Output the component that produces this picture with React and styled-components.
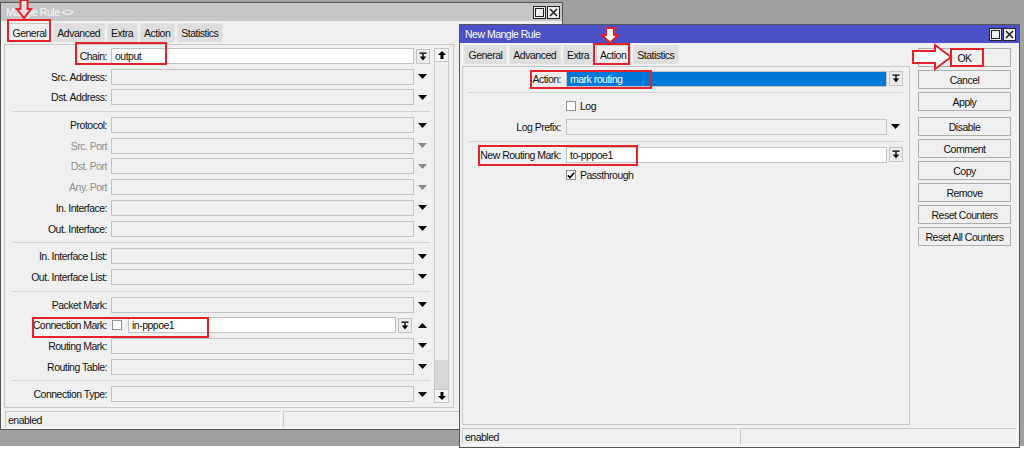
import React from "react";
import styled, { createGlobalStyle } from "styled-components";

const GlobalStyle = createGlobalStyle`
  html, body { margin: 0; padding: 0; background: #fff; }
  body {
    font-family: "Liberation Sans", Arial, sans-serif;
    font-size: 10.5px;
    letter-spacing: -0.5px;
    color: #111;
  }
`;

const RED = "#e52229";

const Desktop = styled.div`
  position: relative;
  width: 1024px;
  height: 459px;
  overflow: hidden;
  background: #fff;
`;

const Backdrop = styled.div`
  height: 446px;
  background: #a0a0a0;
`;

const Window = styled.div`
  position: absolute;
  left: ${(p) => p.$x}px;
  top: ${(p) => p.$y}px;
  width: ${(p) => p.$w}px;
  height: ${(p) => p.$h}px;
  box-sizing: border-box;
  display: flex;
  flex-direction: column;
  background: #f0f0f0;
  border: 1px solid #555;
`;

const TitleBar = styled.div`
  height: 18px;
  flex: none;
  display: flex;
  align-items: center;
  justify-content: space-between;
  padding: 0 ${(p) => p.$padR}px 0 5px;
  background: ${(p) => (p.$active ? "#4c51c8" : "#c6c6c6")};
  color: ${(p) => (p.$active ? "#fff" : "#f7f7f7")};
`;

const TitleButtons = styled.div`
  display: flex;
  gap: 1px;
`;

const Body = styled.div`
  flex: 1;
  min-height: 0;
  display: flex;
  gap: 8px;
  padding: 2px ${(p) => p.$padR}px 0 ${(p) => p.$padL}px;
`;

const Main = styled.div`
  display: flex;
  flex-direction: column;
  width: ${(p) => p.$w}px;
  flex: none;
`;

const TabStrip = styled.div`
  display: flex;
  gap: 2px;
  height: 19px;
  flex: none;
  padding-left: ${(p) => p.$inset}px;
`;

const Tab = styled.div`
  display: flex;
  align-items: center;
  padding: 0 3.5px;
  background: ${(p) => (p.$active ? "#f0f0f0" : "#dedede")};
  border: 1px solid ${(p) => (p.$active ? "#c9c9c9" : "#e4e4e4")};
  border-bottom: none;
`;

const Panel = styled.div`
  flex: 1;
  min-height: 0;
  margin-top: 2px;
  border: 1px solid #c6c6c6;
  display: flex;
  padding: ${(p) => p.$padT}px ${(p) => p.$padR}px 0 0;
`;

const Form = styled.div`
  display: flex;
  flex-direction: column;
  flex: none;
`;

const Row = styled.div`
  display: flex;
  align-items: center;
  height: 16px;
  margin-bottom: 4.7px;
  flex: none;
`;

const Label = styled.div`
  width: ${(p) => p.$w}px;
  margin-right: ${(p) => p.$gap}px;
  text-align: right;
  white-space: nowrap;
  flex: none;
  color: ${(p) => (p.$muted ? "#8e8e8e" : "#111")};
`;

const Field = styled.div`
  width: ${(p) => p.$w}px;
  height: 100%;
  display: flex;
  align-items: center;
  flex: none;
`;

const Box = styled.div`
  flex: 1;
  height: 16px;
  box-sizing: border-box;
  margin-left: ${(p) => p.$ml || 0}px;
  border: 1px solid #c2c2c2;
  background: ${(p) => (p.$selected ? "#0078d7" : p.$filled ? "#fff" : "#f0f0f0")};
  color: ${(p) => (p.$selected ? "#fff" : "#111")};
  padding-left: 3px;
  display: flex;
  align-items: center;
  white-space: nowrap;
  overflow: hidden;
`;

const Tail = styled.div`
  width: 17px;
  height: 100%;
  display: flex;
  align-items: center;
  justify-content: center;
  flex: none;
`;

const ComboBtn = styled.div`
  width: 14px;
  height: 15px;
  box-sizing: border-box;
  margin-left: ${(p) => p.$ml || 0}px;
  border: 1px solid #c4c4c4;
  background: #ececec;
  display: flex;
  align-items: center;
  justify-content: center;
  flex: none;
`;

const Sep = styled.div`
  height: 1px;
  background: #d4d4d4;
  margin: 1px ${(p) => p.$r}px 5px ${(p) => p.$l}px;
  flex: none;
`;

const Check = styled.div`
  width: 10px;
  height: 10px;
  box-sizing: border-box;
  margin-left: ${(p) => p.$ml || 0}px;
  border: 1px solid #8f8f8f;
  background: #fff;
  display: flex;
  align-items: center;
  justify-content: center;
  flex: none;
`;

const CheckText = styled.span`
  margin-left: 4px;
`;

const Scrollbar = styled.div`
  width: 15px;
  margin: 0 0 4px 3px;
  display: flex;
  flex-direction: column;
  flex: none;
`;

const ScrollBtn = styled.div`
  height: 14px;
  box-sizing: border-box;
  border: 1px solid #c4c4c4;
  background: #f4f4f4;
  display: flex;
  align-items: center;
  justify-content: center;
  flex: none;
`;

const Track = styled.div`
  flex: 1;
  border-left: 1px solid #c8c8c8;
  border-right: 1px solid #c8c8c8;
  background: #efefef;
  display: flex;
  flex-direction: column;
  justify-content: flex-end;
`;

const Thumb = styled.div`
  height: 29px;
  background: #d7d7d7;
`;

const Buttons = styled.div`
  width: 93px;
  flex: none;
  display: flex;
  flex-direction: column;
  padding-top: 3px;
`;

const Button = styled.div`
  height: 19px;
  box-sizing: border-box;
  border: 1px solid #adadad;
  background: #f0f0f0;
  margin-bottom: ${(p) => (p.$wide ? 6 : 3)}px;
  display: flex;
  align-items: center;
  justify-content: center;
  white-space: nowrap;
`;

const StatusBar = styled.div`
  display: flex;
  gap: 2px;
  height: 17px;
  flex: none;
  margin: 3px 2px ${(p) => p.$mb}px ${(p) => p.$ml}px;
`;

const StatusCell = styled.div`
  width: ${(p) => (p.$w ? `${p.$w}px` : "auto")};
  flex: ${(p) => (p.$w ? "none" : 1)};
  box-sizing: border-box;
  border: 1px solid;
  border-color: #c8c8c8 #fafafa #fafafa #c8c8c8;
  padding-left: 2px;
  display: flex;
  align-items: center;
`;

const RedBox = styled.div`
  position: absolute;
  left: ${(p) => p.$x}px;
  top: ${(p) => p.$y}px;
  width: ${(p) => p.$w}px;
  height: ${(p) => p.$h}px;
  box-sizing: border-box;
  border: 2px solid ${RED};
  pointer-events: none;
`;

const Overlay = styled.svg`
  position: absolute;
  left: ${(p) => p.$x}px;
  top: ${(p) => p.$y}px;
  overflow: visible;
  pointer-events: none;
`;

/* little drawings */

const DropArrow = ({ muted }) => (
  <svg width="9" height="5" viewBox="0 0 9 5">
    <polygon points="0,0 9,0 4.5,5" fill={muted ? "#8a8a8a" : "#000"} />
  </svg>
);

const UpArrow = () => (
  <svg width="9" height="5" viewBox="0 0 9 5">
    <polygon points="0,5 9,5 4.5,0" fill="#000" />
  </svg>
);

const ComboIcon = () => (
  <svg width="8" height="9" viewBox="0 0 8 9">
    <rect x="0.5" y="0.5" width="7" height="1.3" fill="#000" />
    <rect x="3.3" y="2" width="1.4" height="3" fill="#000" />
    <polygon points="0.8,4.6 7.2,4.6 4,8.6" fill="#000" />
  </svg>
);

const ScrollIcon = ({ down }) => (
  <svg width="8" height="8" viewBox="0 0 8 8">
    <polygon
      points={down ? "4,8 8,4 5.5,4 5.5,0 2.5,0 2.5,4 0,4" : "4,0 8,4 5.5,4 5.5,8 2.5,8 2.5,4 0,4"}
      fill="#000"
    />
  </svg>
);

const Tick = () => (
  <svg width="8" height="7" viewBox="0 0 8 7">
    <polyline points="0.8,3.4 3,5.6 7.2,0.8" fill="none" stroke="#000" strokeWidth="1.6" />
  </svg>
);

const MaxIcon = () => (
  <svg width="13" height="13" viewBox="0 0 13 13">
    <rect x="0.5" y="0.5" width="12" height="12" fill="#f0f0f0" stroke="#222" />
    <rect x="2.5" y="2.5" width="8" height="8" fill="none" stroke="#222" />
  </svg>
);

const CloseIcon = () => (
  <svg width="13" height="13" viewBox="0 0 13 13">
    <rect x="0.5" y="0.5" width="12" height="12" fill="#f0f0f0" stroke="#222" />
    <path d="M3 3 L10 10 M10 3 L3 10" stroke="#222" strokeWidth="1.6" />
  </svg>
);

/* data */

const leftRows = [
  { label: "Chain:", kind: "combo", value: "output" },
  { label: "Src. Address:" },
  { label: "Dst. Address:" },
  "sep",
  { label: "Protocol:" },
  { label: "Src. Port", muted: true },
  { label: "Dst. Port", muted: true },
  { label: "Any. Port", muted: true },
  { label: "In. Interface:" },
  { label: "Out. Interface:" },
  "sep",
  { label: "In. Interface List:" },
  { label: "Out. Interface List:" },
  "sep",
  { label: "Packet Mark:" },
  { label: "Connection Mark:", kind: "mark", value: "in-pppoe1" },
  { label: "Routing Mark:" },
  { label: "Routing Table:" },
  "sep",
  { label: "Connection Type:" },
];

const rightRows = [
  { label: "Action:", kind: "combo", value: "mark routing", selected: true },
  "sep",
  { kind: "check", text: "Log" },
  { label: "Log Prefix:" },
  "sep",
  { label: "New Routing Mark:", kind: "combo", value: "to-pppoe1" },
  { kind: "check", text: "Passthrough", checked: true },
];

const tabs = ["General", "Advanced", "Extra", "Action", "Statistics"];

const buttons = [
  "OK",
  "Cancel",
  "Apply",
  "Disable",
  "Comment",
  "Copy",
  "Remove",
  "Reset Counters",
  "Reset All Counters",
];

const FormRows = ({ rows, dims }) => (
  <Form>
    {rows.map((r, i) => {
      if (r === "sep") return <Sep key={i} $l={dims.sepL} $r={dims.sepR} />;
      let field;
      let tail = null;
      if (r.kind === "check") {
        field = (
          <>
            <Check>{r.checked && <Tick />}</Check>
            <CheckText>{r.text}</CheckText>
          </>
        );
      } else if (r.kind === "mark") {
        field = (
          <>
            <Check $ml={1} />
            <Box $ml={6} $filled>
              {r.value}
            </Box>
            <ComboBtn $ml={2}>
              <ComboIcon />
            </ComboBtn>
            <div style={{ width: 2 }} />
          </>
        );
        tail = <UpArrow />;
      } else if (r.kind === "combo") {
        field = (
          <Box $filled $selected={r.selected}>
            {r.value}
          </Box>
        );
        tail = (
          <ComboBtn>
            <ComboIcon />
          </ComboBtn>
        );
      } else {
        field = <Box />;
        tail = <DropArrow muted={r.muted} />;
      }
      return (
        <Row key={i}>
          <Label $w={dims.label} $gap={dims.gap} $muted={r.muted}>
            {r.label || ""}
          </Label>
          <Field $w={dims.field}>{field}</Field>
          <Tail>{tail}</Tail>
        </Row>
      );
    })}
  </Form>
);

const ButtonColumn = () => (
  <Buttons>
    {buttons.map((b) => (
      <Button key={b} $wide={b === "Apply"}>
        {b}
      </Button>
    ))}
  </Buttons>
);

const TitleControls = () => (
  <TitleButtons>
    <MaxIcon />
    <CloseIcon />
  </TitleButtons>
);

export default function App() {
  return (
    <>
      <GlobalStyle />
      <Desktop>
        <Backdrop />

        {/* Mangle Rule (inactive, behind; its button column is hidden by the other window) */}
        <Window $x={0} $y={2} $w={563} $h={428}>
          <TitleBar $padR={2}>
            <span>Mangle Rule &lt;&gt;</span>
            <TitleControls />
          </TitleBar>
          <Body $padL={3} $padR={7}>
            <Main $w={450}>
              <TabStrip $inset={4}>
                {tabs.map((t) => (
                  <Tab key={t} $active={t === "General"}>
                    {t}
                  </Tab>
                ))}
              </TabStrip>
              <Panel $padT={3} $padR={3}>
                <FormRows
                  rows={leftRows}
                  dims={{ label: 102, gap: 4, field: 303, sepL: 7, sepR: 1 }}
                />
                <Scrollbar>
                  <ScrollBtn>
                    <ScrollIcon />
                  </ScrollBtn>
                  <Track>
                    <Thumb />
                  </Track>
                  <ScrollBtn>
                    <ScrollIcon down />
                  </ScrollBtn>
                </Scrollbar>
              </Panel>
            </Main>
          </Body>
          <StatusBar $ml={4} $mb={1}>
            <StatusCell $w={276}>enabled</StatusCell>
            <StatusCell />
          </StatusBar>
        </Window>

        {/* New Mangle Rule (active) */}
        <Window $x={459} $y={24} $w={561} $h={424}>
          <TitleBar $active $padR={3}>
            <span>New Mangle Rule</span>
            <TitleControls />
          </TitleBar>
          <Body $padL={2} $padR={7}>
            <Main $w={448}>
              <TabStrip $inset={2}>
                {tabs.map((t) => (
                  <Tab key={t} $active={t === "Action"}>
                    {t}
                  </Tab>
                ))}
              </TabStrip>
              <Panel $padT={3.5} $padR={5}>
                <FormRows
                  rows={rightRows}
                  dims={{ label: 98, gap: 5, field: 321, sepL: 5, sepR: 1 }}
                />
              </Panel>
            </Main>
            <ButtonColumn />
          </Body>
          <StatusBar $ml={2} $mb={2}>
            <StatusCell $w={276}>enabled</StatusCell>
            <StatusCell />
          </StatusBar>
        </Window>

        {/* annotations */}
        <RedBox $x={7} $y={19} $w={44} $h={23} />
        <RedBox $x={75} $y={42} $w={92} $h={23} />
        <RedBox $x={32} $y={317} $w={177} $h={21} />
        <RedBox $x={593} $y={43} $w={37} $h={22} />
        <RedBox $x={530} $y={70} $w={122} $h={19} />
        <RedBox $x={478} $y={145} $w={160} $h={21} />
        <RedBox $x={950} $y={48} $w={34} $h={19} />

        <Overlay $x={16} $y={-1} width="16" height="20" viewBox="0 0 16 20">
          <polygon points="4.5,1 11.5,1 11.5,10 15,10 8,19 1,10 4.5,10" fill="#e4e4e4" stroke={RED} strokeWidth="2" />
        </Overlay>
        <Overlay $x={601} $y={27} width="18" height="17" viewBox="0 0 18 17">
          <polygon points="5,1 13,1 13,8 17,8 9,16 1,8 5,8" fill="#fff" stroke={RED} strokeWidth="2" />
        </Overlay>
        <Overlay $x={912} $y={44} width="40" height="26" viewBox="0 0 40 26">
          <polygon points="1,7 23,7 23,1 39,13 23,25 23,19 1,19" fill="#fff" stroke={RED} strokeWidth="2" />
        </Overlay>
      </Desktop>
    </>
  );
}
